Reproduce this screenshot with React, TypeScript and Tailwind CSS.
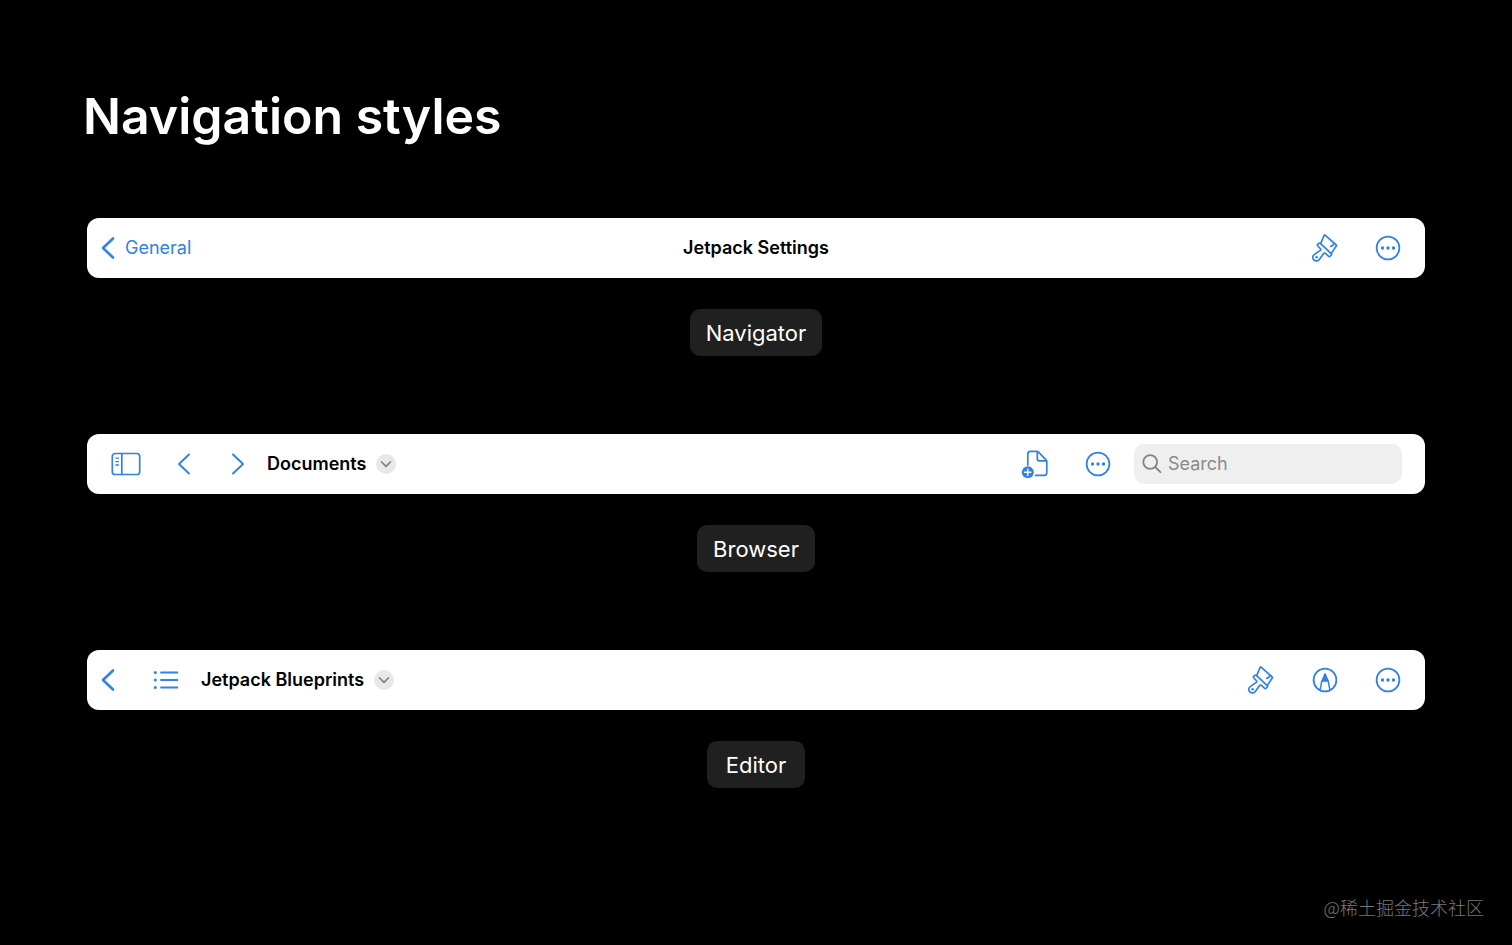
import React from 'react';
import { clsx } from 'clsx';

interface IconButtonProps {
    label: string;
    className?: string;
    children: React.ReactNode;
}

function IconButton({ label, className, children }: IconButtonProps) {
    return (
        <button type="button" aria-label={label} className={clsx("flex shrink-0 items-center justify-center", className)}>
            {children}
        </button>
    );
}

function ChevronIcon({ direction, bold }: { direction: "left" | "right"; bold?: boolean }) {
    return (
        <svg width="14" height="24" viewBox="0 0 14 24" fill="none" stroke="currentColor" strokeWidth={bold ? 2.6 : 1.9} strokeLinecap="round" strokeLinejoin="round">
            {direction === "left" ? <path d="M12 2.5 2 12l10 9.5" /> : <path d="m2 2.5 10 9.5L2 21.5" />}
        </svg>
    );
}

function BrushIcon() {
    return (
        <svg width="28" height="30" viewBox="0 0 28 30" fill="none" stroke="currentColor" strokeWidth="1.7" strokeLinecap="round" strokeLinejoin="round">
            <path d="M9.8 10.4 13 2.6Q13.5 1.5 14.4 2.3L25.2 12Q26 12.9 24.9 13.5L20.4 20.4" />
            <path d="M9.6 10.6 20.2 20.6Q21 21.4 20.2 22.2L19.2 23.2Q18.3 24 17.4 23.2L14.4 20.4Q13.4 19.6 12.6 20.6L8.5 26.2C7 28.3 4.3 28.5 2.8 26.9C1.2 25.2 1.5 22.7 3.5 21.4L9.2 17.4Q10.3 16.5 9.4 15.6L6.7 13Q5.9 12.1 6.7 11.3L7.6 10.5Q8.6 9.7 9.6 10.6Z" />
            <path d="M23.2 10.3 21.8 12.4 19.8 13.3" />
            <circle cx="5.6" cy="24.3" r="1.2" fill="currentColor" stroke="none" />
        </svg>
    );
}

function MoreIcon() {
    return (
        <svg width="26" height="26" viewBox="0 0 26 26" fill="none">
            <circle cx="13" cy="13" r="11.4" stroke="currentColor" strokeWidth="1.8" />
            <g fill="currentColor">
                <circle cx="7.5" cy="13" r="1.7" />
                <circle cx="13" cy="13" r="1.7" />
                <circle cx="18.5" cy="13" r="1.7" />
            </g>
        </svg>
    );
}

function SidebarIcon() {
    return (
        <svg width="30" height="24" viewBox="0 0 30 24" fill="none" stroke="currentColor" strokeWidth="1.7" strokeLinecap="round">
            <rect x="1.3" y="1.5" width="27.4" height="21" rx="2.8" />
            <path d="M10.8 1.5v21" />
            <path d="M4.9 6.2h2.6M4.9 9.6h2.6M4.9 13h2.6" strokeWidth="1.3" />
        </svg>
    );
}

function NewDocumentIcon() {
    return (
        <svg width="28" height="30" viewBox="0 0 28 30" fill="none" stroke="currentColor" strokeWidth="1.7" strokeLinecap="round" strokeLinejoin="round">
            <path d="M6.8 16V5Q6.8 2.4 9.4 2.4H15.6Q16.7 2.4 17.5 3.2L25 10.8Q25.8 11.6 25.8 12.7V23.8Q25.8 26.4 23.2 26.4H14.6" />
            <path d="M16.3 2.6V9.8Q16.3 11.8 18.3 11.8H25.5" />
            <circle cx="6.8" cy="23.3" r="6" fill="currentColor" stroke="none" />
            <path d="M6.8 20.1v6.4M3.6 23.3H10" stroke="white" strokeWidth="1.4" />
        </svg>
    );
}

function ListIcon() {
    return (
        <svg width="26" height="20" viewBox="0 0 26 20" fill="none" stroke="currentColor" strokeWidth="1.8" strokeLinecap="round">
            <path d="M8 2.5h16.4M8 10h16.4M8 17.5h16.4" />
            <g fill="currentColor" stroke="none">
                <circle cx="2.3" cy="2.5" r="1.5" />
                <circle cx="2.3" cy="10" r="1.5" />
                <circle cx="2.3" cy="17.5" r="1.5" />
            </g>
        </svg>
    );
}

function MarkupIcon() {
    return (
        <svg width="26" height="26" viewBox="0 0 26 26" fill="none" stroke="currentColor" strokeWidth="1.8" strokeLinecap="round" strokeLinejoin="round">
            <circle cx="13" cy="13" r="11.4" />
            <path d="M8.2 22.6 9.6 14.8 13 7 16.4 14.8 17.8 22.6" strokeWidth="1.5" />
            <path d="M13 6.6 9.9 14.6H16.1Z" fill="currentColor" strokeWidth="0.6" />
        </svg>
    );
}

function SearchIcon() {
    return (
        <svg width="20" height="20" viewBox="0 0 20 20" fill="none" stroke="currentColor" strokeWidth="1.8" strokeLinecap="round" className="shrink-0">
            <circle cx="8.2" cy="8" r="6.9" />
            <path d="m13.2 13 5.2 5.2" />
        </svg>
    );
}

function TitleMenu({ title }: { title: string }) {
    return (
        <button type="button" className="flex items-center gap-[10px] whitespace-nowrap text-lg font-semibold text-black">
            {title}
            <span className="flex size-5 items-center justify-center rounded-full bg-[#e8e8e8] text-[#808080]">
                <svg width="12" height="8" viewBox="0 0 12 8" fill="none" stroke="currentColor" strokeWidth="1.7" strokeLinecap="round" strokeLinejoin="round">
                    <path d="M1.6 2 6 6.4 10.4 2" />
                </svg>
            </span>
        </button>
    );
}

interface StyleExampleProps {
    name: string;
    children: React.ReactNode;
}

function StyleExample({ name, children }: StyleExampleProps) {
    return (
        <section className="flex flex-col items-center gap-[31px]">
            <div className="h-[60px] w-full rounded-xl bg-white text-[#3280ea]">{children}</div>
            <h2 className="flex h-[47px] min-w-[98px] items-center justify-center rounded-[10px] bg-[#202020] px-4 text-[22px] leading-7 text-white">
                {name}
            </h2>
        </section>
    );
}

function App() {
    return (
        <div className="flex min-h-screen flex-col bg-black font-[Inter,sans-serif]">
            <main className="flex flex-col px-[87px] pt-[84px]">
                <h1 className="-ml-1 text-[50px] leading-16 font-semibold text-white">Navigation styles</h1>

                <div className="mt-[70px] flex flex-col gap-[78px]">
                    <StyleExample name="Navigator">
                        <nav aria-label="Navigator" className="grid h-full grid-cols-[1fr_auto_1fr] items-center px-[14px]">
                            <a href="#general" className="flex items-center gap-[10px] justify-self-start text-lg">
                                <ChevronIcon direction="left" bold />
                                General
                            </a>
                            <span className="text-lg font-semibold text-black">Jetpack Settings</span>
                            <div className="flex items-center gap-9 justify-self-end pr-[10px]">
                                <IconButton label="Format"><BrushIcon /></IconButton>
                                <IconButton label="More"><MoreIcon /></IconButton>
                            </div>
                        </nav>
                    </StyleExample>

                    <StyleExample name="Browser">
                        <nav aria-label="Browser" className="flex h-full items-center justify-between pr-[23px] pl-6">
                            <div className="flex items-center">
                                <IconButton label="Sidebar"><SidebarIcon /></IconButton>
                                <IconButton label="Back" className="ml-9"><ChevronIcon direction="left" /></IconButton>
                                <IconButton label="Forward" className="mr-[22px] ml-10"><ChevronIcon direction="right" /></IconButton>
                                <TitleMenu title="Documents" />
                            </div>
                            <div className="flex items-center gap-9">
                                <IconButton label="New document"><NewDocumentIcon /></IconButton>
                                <div className="flex items-center gap-[23px]">
                                    <IconButton label="More"><MoreIcon /></IconButton>
                                    <label className="flex h-10 w-[268px] items-center gap-[6px] rounded-[10px] bg-[#efefef] px-2 text-[#838383]">
                                        <SearchIcon />
                                        <input
                                            type="search"
                                            aria-label="Search"
                                            placeholder="Search"
                                            className="w-full min-w-0 bg-transparent text-lg outline-none placeholder:text-[#8a8a8a]"
                                        />
                                    </label>
                                </div>
                            </div>
                        </nav>
                    </StyleExample>

                    <StyleExample name="Editor">
                        <nav aria-label="Editor" className="flex h-full items-center justify-between pr-6 pl-[14px]">
                            <div className="flex items-center">
                                <IconButton label="Back"><ChevronIcon direction="left" bold /></IconButton>
                                <IconButton label="Outline" className="mr-[22px] ml-[38px]"><ListIcon /></IconButton>
                                <TitleMenu title="Jetpack Blueprints" />
                            </div>
                            <div className="flex items-center gap-[37px]">
                                <IconButton label="Format"><BrushIcon /></IconButton>
                                <IconButton label="Markup"><MarkupIcon /></IconButton>
                                <IconButton label="More"><MoreIcon /></IconButton>
                            </div>
                        </nav>
                    </StyleExample>
                </div>
            </main>

            <footer className="mt-auto self-end pr-7 pb-6 font-['Noto_Sans_CJK_SC',sans-serif] text-lg leading-[27px] font-light text-[#787878]">
                @稀土掘金技术社区
            </footer>
        </div>
    );
}

export default App;
